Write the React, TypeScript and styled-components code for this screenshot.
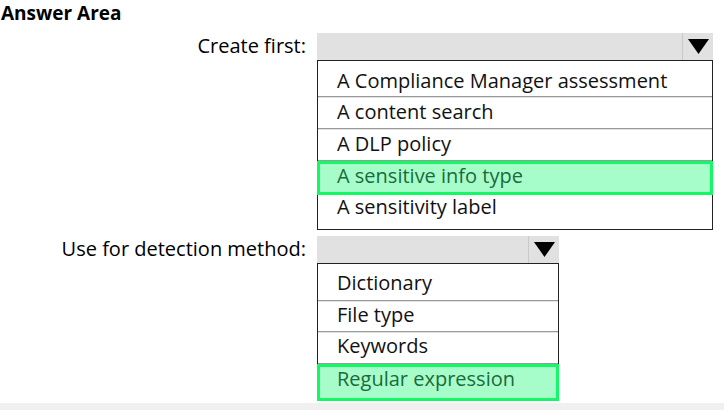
import styled, { createGlobalStyle } from "styled-components";

const GlobalStyle = createGlobalStyle`
  html, body {
    margin: 0;
    padding: 0;
    background: #ffffff;
  }
  body {
    font-family: "Open Sans", "Noto Sans", "Liberation Sans", sans-serif;
    color: #000;
  }
`;

const Page = styled.div`
  display: flex;
  flex-direction: column;
  width: 724px;
  height: 410px;
  overflow: hidden;
`;

const Heading = styled.div`
  font-size: 19px;
  font-weight: 700;
  line-height: 26px;
  padding: 0 0 0 1px;
  height: 33px;
  box-sizing: border-box;
`;

const Form = styled.div`
  display: grid;
  grid-template-columns: 317px auto;
  row-gap: 6px;
  align-items: start;
`;

const Label = styled.div`
  font-size: 20px;
  line-height: 26px;
  text-align: right;
  padding-right: 11px;
  white-space: nowrap;
`;

const Dropdown = styled.div<{ $width: number }>`
  width: ${(p) => p.$width}px;
  display: flex;
  flex-direction: column;
`;

const Header = styled.div`
  height: 27px;
  background: #e1e1e1;
  display: flex;
  justify-content: flex-end;
`;

const ArrowButton = styled.div`
  width: 30px;
  border-left: 1px solid #c9c9c9;
  display: flex;
  align-items: center;
  justify-content: center;
`;

const List = styled.div`
  border: 1px solid #222;
  border-bottom: none;
  display: flex;
  flex-direction: column;
`;

const Option = styled.div<{ $height: number; $pad: number; $last?: boolean }>`
  height: ${(p) => p.$height}px;
  box-sizing: border-box;
  padding: ${(p) => p.$pad}px 0 0 19px;
  font-size: 20px;
  line-height: 24px;
  color: #111;
  border-bottom: 1px solid ${(p) => (p.$last ? "#222" : "#9a9a9a")};
  box-shadow: ${(p) => (p.$last ? "none" : "0 1px 0 #e2e2e2")};
  white-space: nowrap;
`;

const Correct = styled.div<{ $height: number; $pad: number }>`
  height: ${(p) => p.$height}px;
  box-sizing: border-box;
  margin: 0 -1px;
  padding: ${(p) => Math.max(0, p.$pad - 3)}px 0 0 17px;
  font-size: 20px;
  line-height: 24px;
  color: #1b6a3c;
  background: #a7fdca;
  border: 3px solid #14f865;
  white-space: nowrap;
`;

const Band = styled.div`
  margin-top: auto;
  height: 7px;
  background: #f0f0f0;
`;

type Item = { text: string; height: number; pad: number; correct?: boolean; last?: boolean };

const Arrow = () => (
  <svg width="21" height="15" viewBox="0 0 21 15">
    <polygon points="0,0 21,0 10.5,15" fill="#000" />
  </svg>
);

const Select = ({ width, items }: { width: number; items: Item[] }) => (
  <Dropdown $width={width}>
    <Header>
      <ArrowButton>
        <Arrow />
      </ArrowButton>
    </Header>
    <List>
      {items.map((it) =>
        it.correct ? (
          <Correct key={it.text} $height={it.height} $pad={it.pad}>
            {it.text}
          </Correct>
        ) : (
          <Option key={it.text} $height={it.height} $pad={it.pad} $last={it.last}>
            {it.text}
          </Option>
        )
      )}
    </List>
  </Dropdown>
);

const first: Item[] = [
  { text: "A Compliance Manager assessment", height: 36, pad: 8 },
  { text: "A content search", height: 32, pad: 3 },
  { text: "A DLP policy", height: 32, pad: 3 },
  { text: "A sensitive info type", height: 34, pad: 3, correct: true },
  { text: "A sensitivity label", height: 35, pad: 0, last: true },
];

const second: Item[] = [
  { text: "Dictionary", height: 37, pad: 7 },
  { text: "File type", height: 31, pad: 2 },
  { text: "Keywords", height: 32, pad: 2 },
  { text: "Regular expression", height: 37, pad: 3, correct: true },
];

export default function App() {
  return (
    <Page>
      <GlobalStyle />
      <Heading>Answer Area</Heading>
      <Form>
        <Label>Create first:</Label>
        <Select width={396} items={first} />
        <Label>Use for detection method:</Label>
        <Select width={242} items={second} />
      </Form>
      <Band />
    </Page>
  );
}
